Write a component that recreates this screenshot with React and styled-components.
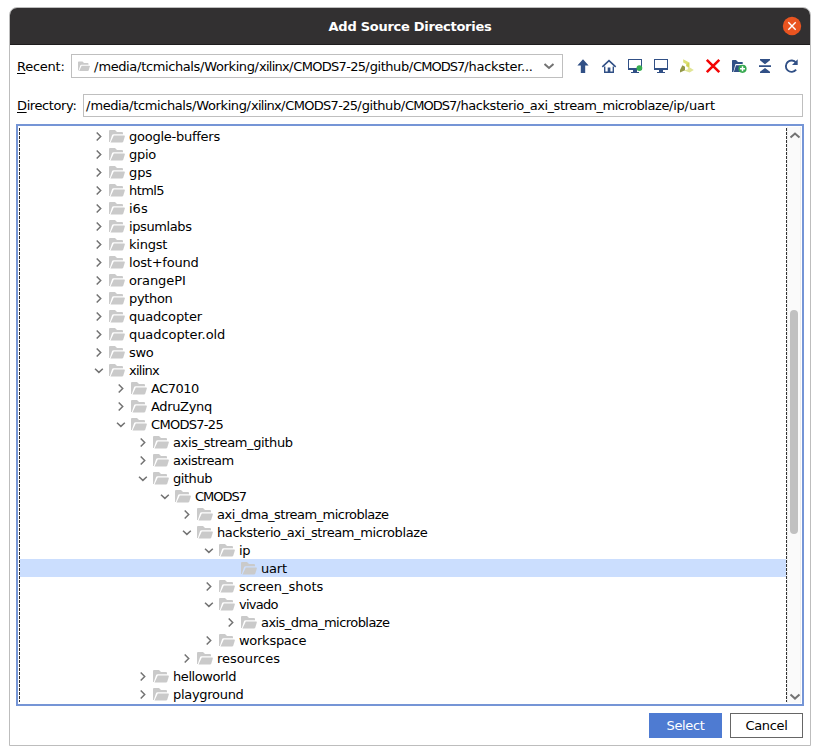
import React from "react";
import styled, { createGlobalStyle } from "styled-components";

const GlobalStyle = createGlobalStyle`
  * { box-sizing: border-box; }
  body { margin: 0; background: #fff; color: #000; font: 13px/18px "DejaVu Sans", sans-serif; }
  svg { display: block; flex: none; }
`;

const Page = styled.main`
  width: 820px;
  height: 755px;
  padding: 7px 9px 9px;
  background: #fff;
`;
const Dialog = styled.section`
  display: flex;
  flex-direction: column;
  width: 802px;
  height: 739px;
  border: 1px solid #bdbdbd;
  border-radius: 8px 8px 0 0;
  overflow: hidden;
`;
const TitleBar = styled.header`
  display: grid;
  grid-template-columns: 36px 1fr 36px;
  align-items: center;
  height: 37px;
  flex: none;
  background: #323031;
  border-bottom: 1px solid #1e1c1d;
  color: #fff;
`;
const Title = styled.h1`
  grid-column: 2;
  margin: 0;
  padding-top: 1px;
  font-size: 13px;
  line-height: 18px;
  letter-spacing: -0.28px;
  text-align: center;
`;
const CloseButton = styled.button`
  width: 20px;
  height: 20px;
  padding: 0;
  margin-left: 8px;
  border: 0;
  background: none;
`;
const RecentRow = styled.div`
  display: flex;
  align-items: center;
  height: 24px;
  margin: 9px 9px 0 7px;
`;
const DirectoryRow = styled(RecentRow)`
  height: 23px;
  margin: 16px 7px 0;
`;
const Label = styled.label`
  width: ${(p) => p.$width}px;
  flex: none;
  padding-top: 1px;
  white-space: nowrap;
  letter-spacing: ${(p) => p.$spacing}px;
`;
const Mnemonic = styled.span`
  text-decoration: underline;
  text-underline-offset: 2px;
  text-decoration-thickness: 1px;
`;
const Combo = styled.div`
  display: flex;
  align-items: center;
  width: 492px;
  flex: none;
  height: 24px;
  padding: 0 4px 0 6px;
  border: 1px solid #bfbfbf;
`;
const ComboText = styled.span`
  flex: 1;
  min-width: 0;
  padding: 1px 0 0 4px;
  white-space: nowrap;
`;
const Toolbar = styled.div`
  display: flex;
  gap: 8px;
  margin-left: 11px;
`;
const PathField = styled.div`
  flex: 1;
  height: 23px;
  padding: 1px 2px;
  border: 1px solid #bfbfbf;
  line-height: 20px;
  white-space: nowrap;
`;
const Tracked = styled.span`
  letter-spacing: ${(p) => p.$spacing}px;
`;
const TreePane = styled.div`
  display: flex;
  height: 582px;
  margin: 7px 6px 0;
  padding: 1px 0 1px 1px;
  border: 2px solid #7595d6;
`;
const DashedEdge = styled.div`
  width: 1px;
  flex: none;
  margin: 1px 0;
  background: repeating-linear-gradient(#333 0 3px, transparent 3px 4px);
`;
const Tree = styled.div`
  flex: 1;
  overflow: hidden;
`;
const TreeRow = styled.div`
  display: flex;
  align-items: center;
  height: 18px;
  padding-left: ${(p) => 73 + p.$depth * 22}px;
  background: ${(p) => (p.$selected ? "#cbdefe" : "transparent")};
`;
const Toggle = styled.span`
  width: 16px;
  height: 18px;
`;
const NodeName = styled(Tracked)`
  margin-left: 4px;
  padding-top: 2px;
  white-space: nowrap;
`;
const ScrollBar = styled.div`
  display: flex;
  flex-direction: column;
  align-items: center;
  width: 14px;
  margin-right: 1px;
  background: #fafafa;
  border: 1px solid #eee;
  border-width: 0 1px;
`;
const Thumb = styled.div`
  width: 8px;
  height: 224px;
  margin: 165px 0 auto;
  border-radius: 4px;
  background: #c1c1c1;
`;
const Footer = styled.footer`
  display: flex;
  justify-content: flex-end;
  gap: 8px;
  padding: 7px 7px 0;
`;
const Button = styled.button`
  width: 73px;
  height: 25px;
  padding: 0;
  border: 1px solid ${(p) => (p.$primary ? "#4e7bd2" : "#666")};
  background: ${(p) => (p.$primary ? "#4e7bd2" : "#fff")};
  color: ${(p) => (p.$primary ? "#fff" : "#000")};
  font: 13px/18px "DejaVu Sans", sans-serif;
  letter-spacing: -0.35px;
`;

function Folder({ small }) {
  return (
    <svg width={small ? 12 : 16} height={small ? 12 : 16} viewBox="0 0 16 16">
      <path fill="#cacaca" d="M0 14V3Q0 2 1 2H6L8 4H13Q14 4 14 5V6.2H4.5Q3.4 6.2 3 7.2L0.8 14Z" />
      <path fill="#cacaca" d="M4.8 7.5H15.2Q16 7.5 15.8 8.4L14.3 13.6Q14 14.6 13 14.6H1.5Z" />
    </svg>
  );
}

const chevrons = {
  right: "M3.7 5.5L7.7 9.5L3.7 13.5",
  down: "M2 7.7L5.9 11.4L9.8 7.7",
  scrollUp: "M5.5 10.5L10 6.5L14.5 10.5",
  scrollDown: "M5.5 9.6L10 13.6L14.5 9.6",
  combo: "M4.5 7L9 11L13.5 7",
};

function Chevron({ kind, bold }) {
  return (
    <svg width="18" height="18" viewBox="0 0 18 18" fill="none" stroke="#737373" strokeWidth={bold ? 2 : 1.5}>
      <path d={chevrons[kind]} />
    </svg>
  );
}

const blue = "#315086";
const monitor = (
  <>
    <path fill={blue} d="M2 2H16V13H11V15H13V16H5V15H7V13H2Z" />
    <path fill="#fff" d="M3 3H15V11H3Z" />
  </>
);
const tools = {
  Up: <path fill={blue} d="M9 2.2L14.6 8.4H11.2V16H6.8V8.4H3.4Z" />,
  Home: (
    <>
      <path d="M2.3 9.8L9 3.7L15.7 9.8" fill="none" stroke={blue} strokeWidth="1.6" />
      <path d="M4.7 9.5V15.3H13.3V9.5" fill="none" stroke={blue} strokeWidth="1.4" />
      <path fill={blue} d="M7.7 10.5H10.4V15.5H7.7Z" />
    </>
  ),
  Project: (
    <>
      {monitor}
      <circle cx="13.4" cy="11.1" r="2.9" fill="#37ae50" />
    </>
  ),
  Desktop: monitor,
  Vivado: (
    <>
      <path fill="#e1e596" d="M9.5 9L15.8 12.9L11.6 15.4L6.2 13.6L10 12.2Z" />
      <path fill="#dce076" d="M5.2 2.2L11.3 5.4V10.2L8 9V7L5.2 5.4Z" />
      <path fill="#ced256" d="M9.4 6.4L11.3 5.6V10.2L8.4 9.2Z" />
      <path fill="#929746" d="M4.4 8.2L7 9.8V13.2L2 15.6V13Z" />
    </>
  ),
  Delete: <path d="M2.8 2.8L15.3 15.2M15.3 2.8L2.8 15.2" fill="none" stroke="#f30505" strokeWidth="2.6" />,
  NewFolder: (
    <>
      <path fill={blue} d="M2 15V3.7Q2 3 2.8 3H6L8 5H12.7V7H5.5L3.3 15Z" />
      <path fill={blue} d="M6 8.2H14.5L12 15H3.8Z" />
      <circle cx="12.5" cy="11.8" r="4.1" fill="#37a950" />
      <path d="M12.5 9.3V14.3M10 11.8H15" stroke="#fff" strokeWidth="1.5" />
    </>
  ),
  Collapse: (
    <path fill={blue} d="M4 2H14V3.3L9 7.3L4 3.3ZM3 8.2H15V10H3ZM9 11L14 14.8V16H4V14.8Z" />
  ),
  Refresh: (
    <>
      <path d="M14.1 5.7A5.7 5.7 0 1 0 14.1 12.6" fill="none" stroke={blue} strokeWidth="1.9" />
      <path fill={blue} d="M15.7 2.3V8H10Z" />
    </>
  ),
};

// [name, depth, toggle, letter spacing]
const nodes = [
  ["google-buffers", 0, "right", -0.25],
  ["gpio", 0, "right", -0.25],
  ["gps", 0, "right", -0.1],
  ["html5", 0, "right", -0.6],
  ["i6s", 0, "right", 0],
  ["ipsumlabs", 0, "right", -0.4],
  ["kingst", 0, "right", -0.25],
  ["lost+found", 0, "right", -0.2],
  ["orangePI", 0, "right", -0.1],
  ["python", 0, "right", -0.33],
  ["quadcopter", 0, "right", -0.15],
  ["quadcopter.old", 0, "right", -0.07],
  ["swo", 0, "right", -0.3],
  ["xilinx", 0, "down", -0.75],
  ["AC7010", 1, "right", -0.5],
  ["AdruZynq", 1, "right", -0.35],
  ["CMODS7-25", 1, "down", -0.7],
  ["axis_stream_github", 2, "right", -0.37],
  ["axistream", 2, "right", -0.45],
  ["github", 2, "down", -0.45],
  ["CMODS7", 3, "down", -1],
  ["axi_dma_stream_microblaze", 4, "right", -0.51],
  ["hacksterio_axi_stream_microblaze", 4, "down", -0.4],
  ["ip", 5, "down", -0.3],
  ["uart", 6, null, -0.2],
  ["screen_shots", 5, "right", -0.03],
  ["vivado", 5, "down", -0.75],
  ["axis_dma_microblaze", 6, "right", -0.55],
  ["workspace", 5, "right", -0.27],
  ["resources", 4, "right", 0],
  ["helloworld", 2, "right", -0.42],
  ["playground", 2, "right", -0.3],
];
const spacingOf = {
  ...Object.fromEntries(nodes.map(([name, , , spacing]) => [name, spacing])),
  "hackster...": -0.3,
  hacksterio_axi_stream_microblaze: -0.46,
};

function Path({ value }) {
  return value.split("/").slice(1).map((part, i) => (
    <React.Fragment key={i}>
      <Tracked $spacing={0}>/</Tracked>
      <Tracked $spacing={spacingOf[part] ?? -0.4}>{part}</Tracked>
    </React.Fragment>
  ));
}

export default function App() {
  return (
    <Page>
      <GlobalStyle />
      <Dialog>
        <TitleBar>
          <Title>Add Source Directories</Title>
          <CloseButton aria-label="Close">
            <svg width="20" height="20" viewBox="0 0 20 20">
              <circle cx="10" cy="10" r="9.2" fill="#e95420" />
              <path d="M6.3 6.3L13.7 13.7M13.7 6.3L6.3 13.7" stroke="#fff" strokeWidth="1.4" />
            </svg>
          </CloseButton>
        </TitleBar>
        <RecentRow>
          <Label $width={54} $spacing={-0.25}><Mnemonic>R</Mnemonic>ecent:</Label>
          <Combo>
            <Folder small />
            <ComboText><Path value="/media/tcmichals/Working/xilinx/CMODS7-25/github/CMODS7/hackster..." /></ComboText>
            <Chevron kind="combo" bold />
          </Combo>
          <Toolbar>
            {Object.entries(tools).map(([name, drawing]) => (
              <svg key={name} width="18" height="18" viewBox="0 0 18 18" aria-label={name}>{drawing}</svg>
            ))}
          </Toolbar>
        </RecentRow>
        <DirectoryRow>
          <Label $width={66} $spacing={-0.4}><Mnemonic>D</Mnemonic>irectory:</Label>
          <PathField>
            <Path value="/media/tcmichals/Working/xilinx/CMODS7-25/github/CMODS7/hacksterio_axi_stream_microblaze/ip/uart" />
          </PathField>
        </DirectoryRow>
        <TreePane>
          <DashedEdge />
          <Tree>
            {nodes.map(([name, depth, toggle, spacing]) => (
              <TreeRow key={name} $depth={depth} $selected={name === "uart"}>
                <Toggle>{toggle && <Chevron kind={toggle} />}</Toggle>
                <Folder />
                <NodeName $spacing={spacing}>{name}</NodeName>
              </TreeRow>
            ))}
          </Tree>
          <DashedEdge />
          <ScrollBar>
            <Chevron kind="scrollUp" bold />
            <Thumb />
            <Chevron kind="scrollDown" bold />
          </ScrollBar>
        </TreePane>
        <Footer>
          <Button $primary>Select</Button>
          <Button>Cancel</Button>
        </Footer>
      </Dialog>
    </Page>
  );
}
